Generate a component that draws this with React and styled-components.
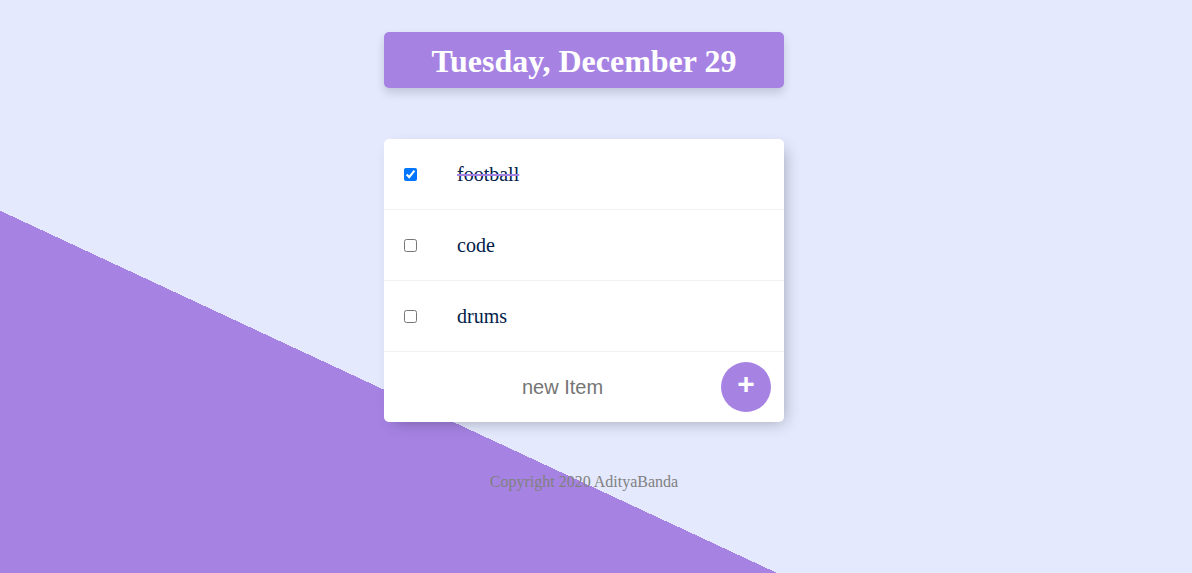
import { useState } from "react";
import styled, { createGlobalStyle } from "styled-components";

const GlobalStyle = createGlobalStyle`
  html, body {
    margin: 0;
    padding: 0;
  }
  body {
    font-family: "Liberation Serif", "Times New Roman", serif;
  }
`;

const Page = styled.div`
  min-height: 100vh;
  box-sizing: border-box;
  padding: 32px 24px 0 0;
  display: flex;
  flex-direction: column;
  align-items: center;
  background: linear-gradient(25deg, #a683e3 32.1%, #e4e9fd 32.1%);
`;

const Heading = styled.div`
  width: 400px;
  height: 56px;
  display: flex;
  align-items: center;
  justify-content: center;
  background-color: #a683e3;
  border-radius: 5px;
  box-shadow: 0 5px 10px rgba(0, 0, 0, 0.15);
  margin-bottom: 51px;

  h1 {
    margin: 0;
    color: #fff;
    font-size: 32px;
    font-weight: 700;
    line-height: 1;
    padding-top: 2px;
  }
`;

const Card = styled.div`
  width: 400px;
  background: #fff;
  border-radius: 5px;
  box-shadow: 5px 5px 15px -5px rgba(0, 0, 0, 0.3);
`;

const Item = styled.div`
  height: 70px;
  display: flex;
  align-items: center;
  border-bottom: 1px solid #f1f1f1;

  input {
    margin: 0 20px;
    width: 13px;
    height: 13px;
  }
`;

const Label = styled.p`
  margin: 0;
  padding: 0 20px;
  font-size: 20px;
  color: #00204a;
  text-decoration: ${(p) => (p.$done ? "line-through" : "none")};
  text-decoration-color: #a683e3;
`;

const Form = styled.form`
  height: 70px;
  display: flex;
  align-items: center;
`;

const NewInput = styled.input`
  width: 313px;
  margin-left: 22px;
  padding: 0;
  height: 40px;
  border: none;
  outline: none;
  background: transparent;
  text-align: center;
  font-family: "Liberation Sans", Arial, sans-serif;
  font-size: 20px;

  &::placeholder {
    color: #757575;
  }
`;

const AddButton = styled.button`
  margin-left: auto;
  margin-right: 13px;
  width: 50px;
  height: 50px;
  border: none;
  border-radius: 50%;
  background-color: #a683e3;
  color: #fff;
  font-family: "Liberation Sans", Arial, sans-serif;
  font-size: 30px;
  font-weight: 700;
  line-height: 1;
  padding: 0 0 6px;
  cursor: pointer;
`;

const Footer = styled.footer`
  margin-top: 51px;
  color: gray;
  font-size: 16px;
  text-align: center;
`;

function App() {
  const [items, setItems] = useState([
    { name: "football", done: true },
    { name: "code", done: false },
    { name: "drums", done: false },
  ]);

  const toggle = (i) =>
    setItems(items.map((it, k) => (k === i ? { ...it, done: !it.done } : it)));

  return (
    <Page>
      <GlobalStyle />
      <Heading>
        <h1>Tuesday, December 29</h1>
      </Heading>
      <Card>
        {items.map((it, i) => (
          <Item key={it.name}>
            <input type="checkbox" checked={it.done} onChange={() => toggle(i)} />
            <Label $done={it.done}>{it.name}</Label>
          </Item>
        ))}
        <Form onSubmit={(e) => e.preventDefault()}>
          <NewInput type="text" placeholder="new Item" autoComplete="off" />
          <AddButton type="submit">+</AddButton>
        </Form>
      </Card>
      <Footer>Copyright 2020 AdityaBanda</Footer>
    </Page>
  );
}

export default App;
